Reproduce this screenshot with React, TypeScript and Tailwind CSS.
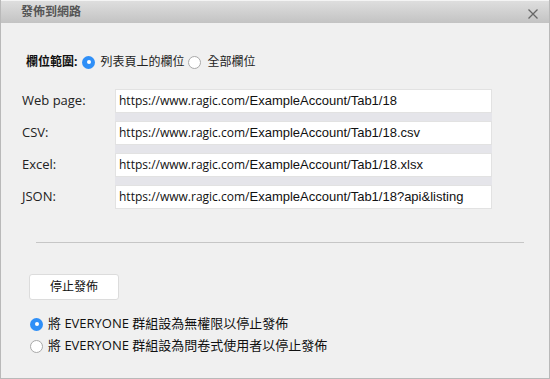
import React from "react";

const CJK = "font-['Open_Sans','Noto_Sans_CJK_TC',sans-serif]";

function Radio({ checked }: { checked: boolean }) {
  return checked ? (
    <span className="w-[13px] h-[13px] rounded-full bg-[#2f8ff7] flex items-center justify-center shrink-0">
      <span className="block w-[4px] h-[4px] rounded-full bg-white" />
    </span>
  ) : (
    <span className="block w-[13px] h-[13px] rounded-full bg-white border border-[#a9a9a9] shrink-0" />
  );
}

const rows = [
  { label: "Web page:", suffix: "ExampleAccount/Tab1/18" },
  { label: "CSV:", suffix: "ExampleAccount/Tab1/18.csv" },
  { label: "Excel:", suffix: "ExampleAccount/Tab1/18.xlsx" },
  { label: "JSON:", suffix: "ExampleAccount/Tab1/18?api&listing" },
];

export default function App() {
  return (
    <div className={`w-[550px] h-[379px] flex flex-col bg-[#f0f0f0] border-x border-b border-[#b9b9b9] text-[#222] ${CJK}`}>
      <div className="h-[23px] shrink-0 flex items-center justify-between pl-[20px] pr-[10px] bg-gradient-to-b from-[#dedede] to-[#c3c3c3] border-t border-[#f4f4f4]">
        <span className="text-[12px] font-bold text-[#555] leading-none">發佈到網路</span>
        <svg width="12" height="12" viewBox="0 0 12 12" className="mt-[3px]">
          <path d="M1.5 1.5 L10.5 10.5 M10.5 1.5 L1.5 10.5" stroke="#666" strokeWidth="1.3" />
        </svg>
      </div>
      <div className="flex flex-col pl-[21px]">
        <div className="mt-[31px] h-4 flex items-center ml-[4px] text-[12px] leading-none">
          <span className="font-bold text-[#111]">欄位範圍:</span>
          <span className="ml-[5px]"><Radio checked /></span>
          <span className="ml-[5px]">列表頁上的欄位</span>
          <span className="ml-[4px]"><Radio checked={false} /></span>
          <span className="ml-[6px]">全部欄位</span>
        </div>
        <div className="mt-[19px] flex">
          <div className="w-[93px] flex flex-col gap-2">
            {rows.map((r) => (
              <div key={r.label} className="h-6 flex items-center text-[13px] text-[#222] font-['Open_Sans',sans-serif]">
                {r.label}
              </div>
            ))}
          </div>
          <div className="w-[377px] flex flex-col gap-2 bg-[#e5e5ea]">
            {rows.map((r) => (
              <div key={r.label} className="h-6 flex items-center bg-white border border-[#e2e2e2] pl-[3px] text-[#111] whitespace-nowrap overflow-hidden">
                <span className="text-[12px] font-['Open_Sans',sans-serif]">https://www.ragic.com/</span>
                <span className="text-[13px] font-['Liberation_Sans',Arial,sans-serif]">{r.suffix}</span>
              </div>
            ))}
          </div>
        </div>
        <div className="mt-[33px] ml-[14px] w-[488px] h-px bg-[#c6c6c6]" />
        <button className="mt-[31px] ml-[7px] w-[90px] h-[26px] bg-white border border-[#dcdcdc] rounded-[3px] text-[12px] text-[#111] flex items-center justify-center">
          停止發佈
        </button>
        <div className="mt-[13px] ml-[8px] flex flex-col text-[13px] text-[#111]">
          <div className="h-[22px] flex items-center gap-[5px]">
            <Radio checked />
            <span>將 EVERYONE 群組設為無權限以停止發佈</span>
          </div>
          <div className="h-[22px] flex items-center gap-[5px]">
            <Radio checked={false} />
            <span>將 EVERYONE 群組設為問卷式使用者以停止發佈</span>
          </div>
        </div>
      </div>
    </div>
  );
}
